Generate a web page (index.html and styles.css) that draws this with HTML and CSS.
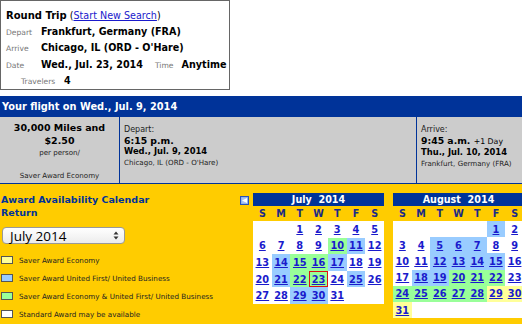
FILE: index.html
```html
<!DOCTYPE html>
<html lang="en">
<head>
    <meta charset="UTF-8">
    <title>Award Availability Calendar</title>
    <link rel="stylesheet" href="styles.css">
</head>
<body>
    <!-- Search summary -->
    <div class="search-box">
        <div class="trip-row"><b>Round Trip</b>&nbsp;(<a href="#">Start New Search</a>)</div>
        <div class="trip-row"><span class="label">Depart</span><span class="value">Frankfurt, Germany (FRA)</span></div>
        <div class="trip-row"><span class="label">Arrive</span><span class="value">Chicago, IL (ORD - O'Hare)</span></div>
        <div class="trip-row"><span class="label">Date</span><span class="value">Wed., Jul. 23, 2014</span><span class="label time-label">Time</span><span class="value">Anytime</span></div>
        <div class="trip-row travelers"><span class="label">Travelers</span><span class="value">4</span></div>
    </div>

    <!-- Selected outbound flight -->
    <div class="flight-bar">Your flight on Wed., Jul. 9, 2014</div>
    <div class="flight-info">
        <div class="fare">
            <div class="miles">30,000 Miles and<br>$2.50</div>
            <div class="small">per person/</div>
            <div class="small fare-type">Saver Award Economy</div>
        </div>
        <div class="leg">
            <div class="leg-label">Depart:</div>
            <div class="leg-time">6:15 p.m.</div>
            <div class="leg-date">Wed., Jul. 9, 2014</div>
            <div class="small">Chicago, IL (ORD - O'Hare)</div>
        </div>
        <div class="leg">
            <div class="leg-label">Arrive:</div>
            <div class="leg-time">9:45 a.m. <span class="plus-day">+1 Day</span></div>
            <div class="leg-date">Thu., Jul. 10, 2014</div>
            <div class="small">Frankfurt, Germany (FRA)</div>
        </div>
    </div>

    <!-- Return calendar -->
    <div class="award">
        <div class="award-side">
            <div class="award-head">
                <h3>Award Availability Calendar<br>Return</h3>
                <span class="collapse-icon">
                    <svg width="9" height="9" viewBox="0 0 9 9">
                        <rect x="0.5" y="0.5" width="8" height="8" fill="#7fa6e6" stroke="#2a52b8"/>
                        <rect x="1.5" y="1.5" width="6" height="6" fill="#a9c4f2"/>
                        <path d="M2 4.5 L7 2 L7 7 Z" fill="#ffffff"/>
                    </svg>
                </span>
            </div>
            <div class="month-select">
                <span>July 2014</span>
                <svg width="6" height="9" viewBox="0 0 6 9">
                    <path d="M0.5 3.5 L3 0.5 L5.5 3.5 Z" fill="#333"/>
                    <path d="M0.5 5.5 L3 8.5 L5.5 5.5 Z" fill="#333"/>
                </svg>
            </div>
            <ul class="legend">
                <li><span class="swatch economy"></span>Saver Award Economy</li>
                <li><span class="swatch premium"></span>Saver Award United First/ United Business</li>
                <li><span class="swatch both"></span>Saver Award Economy &amp; United First/ United Business</li>
                <li><span class="swatch"></span>Standard Award may be available</li>
            </ul>
        </div>

        <div class="cal">
            <div class="cal-title">July&nbsp; 2014</div>
            <div class="cal-days"><span>S</span><span>M</span><span>T</span><span>W</span><span>T</span><span>F</span><span>S</span></div>
            <div class="cal-grid">
                <span></span><span></span><a href="#">1</a><a href="#">2</a><a href="#">3</a><a href="#">4</a><a href="#">5</a>
                <a href="#">6</a><a href="#">7</a><a href="#">8</a><a href="#">9</a><a href="#" class="both">10</a><a href="#" class="premium">11</a><a href="#">12</a>
                <a href="#">13</a><a href="#" class="premium">14</a><a href="#" class="both">15</a><a href="#" class="both">16</a><a href="#" class="premium">17</a><a href="#">18</a><a href="#">19</a>
                <a href="#">20</a><a href="#" class="premium">21</a><a href="#" class="both">22</a><a href="#" class="both selected">23</a><a href="#">24</a><a href="#" class="premium">25</a><a href="#">26</a>
                <a href="#">27</a><a href="#">28</a><a href="#" class="premium">29</a><a href="#" class="premium">30</a><a href="#">31</a><span></span><span></span>
            </div>
        </div>

        <div class="cal">
            <div class="cal-title">August&nbsp; 2014</div>
            <div class="cal-days"><span>S</span><span>M</span><span>T</span><span>W</span><span>T</span><span>F</span><span>S</span></div>
            <div class="cal-grid six-weeks">
                <span></span><span></span><span></span><span></span><span></span><a href="#" class="premium">1</a><a href="#">2</a>
                <a href="#">3</a><a href="#">4</a><a href="#" class="premium">5</a><a href="#" class="premium">6</a><a href="#" class="premium">7</a><a href="#">8</a><a href="#">9</a>
                <a href="#">10</a><a href="#">11</a><a href="#" class="premium">12</a><a href="#" class="premium">13</a><a href="#" class="premium">14</a><a href="#" class="premium">15</a><a href="#">16</a>
                <a href="#">17</a><a href="#" class="premium">18</a><a href="#" class="premium">19</a><a href="#" class="both">20</a><a href="#" class="both">21</a><a href="#" class="both">22</a><a href="#">23</a>
                <a href="#" class="both">24</a><a href="#" class="both">25</a><a href="#" class="both">26</a><a href="#" class="both">27</a><a href="#" class="both">28</a><a href="#" class="economy">29</a><a href="#" class="economy">30</a>
                <a href="#" class="economy">31</a><span></span><span></span><span></span><span></span><span></span><span></span>
            </div>
        </div>
    </div>
</body>
</html>
```

FILE: styles.css
```css
* {
    box-sizing: border-box;
}
body {
    margin: 0;
    font-family: "DejaVu Sans", Verdana, sans-serif;
    font-size: 9.6px;
    color: #000;
    background-color: #fff;
    overflow: hidden;
}
a {
    color: #1a1acc;
}

/* search summary box */
.search-box {
    width: 230px;
    height: 90px;
    border: 1px solid #666;
    padding: 7px 0 0 5px;
}
.trip-row {
    display: flex;
    align-items: baseline;
    line-height: 15.5px;
    white-space: nowrap;
}
.trip-row b {
    font-size: 10px;
}
.trip-row .label {
    flex: 0 0 35px;
    font-size: 7.6px;
    color: #777;
}
.trip-row .value {
    font-weight: bold;
}
.trip-row .time-label {
    flex: 0 0 auto;
    margin: 0 8px 0 12px;
}
.trip-row.travelers {
    padding-left: 15px;
}
.trip-row.travelers .label {
    flex-basis: 43px;
}

/* flight bar */
.flight-bar {
    margin-top: 6px;
    height: 21px;
    line-height: 21px;
    padding-left: 2px;
    background-color: #003399;
    color: #fff;
    font-weight: bold;
    font-size: 9.8px;
}
.flight-info {
    display: grid;
    grid-template-columns: 119px 297px 1fr;
    height: 67px;
    background-color: #ccc;
    border-bottom: 1px solid #003399;
}
.fare {
    text-align: center;
    padding-top: 5px;
}
.miles {
    font-weight: bold;
    font-size: 9.5px;
    line-height: 12.5px;
}
.small {
    font-size: 7.1px;
    line-height: 11px;
    color: #222;
}
.fare .fare-type {
    margin-top: 12px;
}
.leg {
    border-left: 1px solid #003399;
    padding: 7px 0 0 4px;
}
.leg-label {
    font-size: 8px;
    line-height: 11px;
    color: #222;
}
.leg-time {
    font-weight: bold;
    font-size: 9.3px;
    line-height: 11px;
}
.plus-day {
    font-weight: normal;
    font-size: 7.8px;
}
.leg-date {
    font-weight: bold;
    font-size: 8.4px;
    line-height: 11px;
}

/* award calendar area */
.award {
    display: flex;
    align-items: flex-start;
    background-color: #ffcc00;
    padding-top: 9px;
    height: 150px;
    overflow: hidden;
}
.award-side {
    flex: 0 0 253px;
}
.award-head {
    display: flex;
    justify-content: space-between;
    padding-right: 4px;
}
.award-head h3 {
    margin: 0 0 0 1px;
    font-size: 9.5px;
    line-height: 13px;
    color: #003399;
}
.collapse-icon {
    margin-top: 3px;
    height: 9px;
}
.month-select {
    display: flex;
    align-items: center;
    justify-content: space-between;
    width: 123px;
    height: 17px;
    margin: 8px 0 0 2px;
    padding: 0 5px 0 7px;
    border: 1px solid #999;
    border-radius: 4px;
    background: linear-gradient(#ffffff, #ececec);
    font-family: "Open Sans", sans-serif;
    font-size: 13.5px;
}
.legend {
    list-style: none;
    margin: 7px 0 0 0;
    padding: 0;
}
.legend li {
    display: flex;
    align-items: center;
    height: 18px;
    font-size: 7.2px;
    color: #222;
}
.swatch {
    width: 12px;
    height: 8px;
    margin: 0 6px 0 1px;
    border: 1px solid #555;
    background-color: #fff;
}
.economy {
    background-color: #ffff99;
}
.premium {
    background-color: #99ccff;
}
.both {
    background-color: #99ff99;
}

/* month grids */
.cal {
    flex: 0 0 131px;
    margin-right: 9px;
}
.cal-title {
    height: 13px;
    line-height: 13px;
    background-color: #003399;
    color: #fff;
    font-weight: bold;
    text-align: center;
}
.cal-days,
.cal-grid {
    display: grid;
    grid-template-columns: repeat(7, 1fr);
}
.cal-days {
    height: 15px;
    line-height: 15px;
    text-align: center;
    font-weight: bold;
    color: #1a2a88;
}
.cal-grid {
    background-color: #fff;
    grid-auto-rows: 16.6px;
}
.cal-grid.six-weeks {
    grid-auto-rows: 16.2px;
}
.cal-grid a {
    display: flex;
    align-items: center;
    justify-content: center;
    font-weight: bold;
    font-size: 9.8px;
}
.cal-grid a.selected {
    border: 1px solid #dd1111;
}
```
